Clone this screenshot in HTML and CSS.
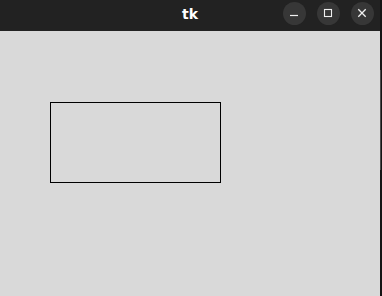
FILE: index.html
```html
<!DOCTYPE html>
<html>
<head>
<meta charset="utf-8">
<title>tk</title>
<link rel="stylesheet" href="styles.css">
</head>
<body>
<div class="window">
  <div class="titlebar">
    <div class="spacer"></div>
    <div class="title">tk</div>
    <div class="controls">
      <div class="btn">
        <svg width="23" height="23" viewBox="0 0 23 23"><line x1="7" y1="13.5" x2="15" y2="13.5" stroke="#f0f0f0" stroke-width="1.2"/></svg>
      </div>
      <div class="btn">
        <svg width="23" height="23" viewBox="0 0 23 23"><rect x="7.5" y="7.5" width="7" height="7" fill="none" stroke="#f0f0f0" stroke-width="1.1"/></svg>
      </div>
      <div class="btn">
        <svg width="23" height="23" viewBox="0 0 23 23"><path d="M7.3 7.3 L14.7 14.7 M14.7 7.3 L7.3 14.7" stroke="#f0f0f0" stroke-width="1.3" fill="none"/></svg>
      </div>
    </div>
  </div>
  <div class="canvas">
    <div class="box"></div>
  </div>
</div>
<div class="edge"><div class="edge-line"></div></div>
</body>
</html>
```
FILE: styles.css
```css
html, body {
  margin: 0;
  padding: 0;
}
body {
  width: 382px;
  height: 296px;
  display: flex;
  overflow: hidden;
  background: #141414;
}
.window {
  width: 380px;
  height: 296px;
  display: flex;
  flex-direction: column;
}
.titlebar {
  height: 31px;
  flex: none;
  background: #222222;
  display: grid;
  grid-template-columns: 1fr auto 1fr;
  align-items: start;
}
.title {
  font-family: "DejaVu Sans", sans-serif;
  font-weight: bold;
  font-size: 14px;
  line-height: 16px;
  color: #ffffff;
  padding-top: 6px;
}
.controls {
  display: flex;
  justify-content: flex-end;
  gap: 11px;
  padding: 2px 6px 0 0;
}
.btn {
  width: 23px;
  height: 23px;
  border-radius: 50%;
  background: #373737;
  display: flex;
}
.canvas {
  flex: 1;
  background: #d9d9d9;
  padding: 71px 0 0 50px;
}
.box {
  box-sizing: border-box;
  width: 171px;
  height: 81px;
  border: 1px solid #000000;
}
.edge {
  width: 2px;
  height: 296px;
  background: #141414;
  padding-top: 70px;
  box-sizing: border-box;
}
.edge-line {
  width: 1px;
  height: 100px;
  background: #4a4a4a;
}
```
